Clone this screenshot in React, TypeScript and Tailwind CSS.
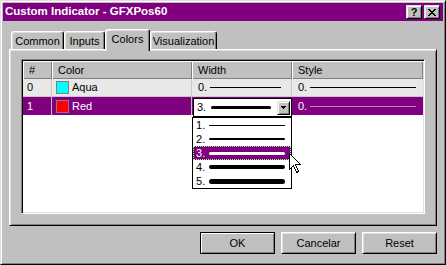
import React from "react";

const F = "font-['Liberation_Sans',Arial,sans-serif]";

function TitleBtn({ children }: { children: React.ReactNode }) {
  return (
    <div className="w-[16px] h-[14px] bg-[#c0c0c0] border border-t-[#dfdfdf] border-l-[#dfdfdf] border-r-black border-b-black shadow-[inset_1px_1px_#fff,inset_-1px_-1px_#808080] flex items-center justify-center">
      {children}
    </div>
  );
}

function Tab({ label, w, selected }: { label: string; w: string; selected?: boolean }) {
  if (selected) {
    return (
      <div
        className={`${w} h-[22px] -mb-[2px] relative z-10 bg-[#c0c0c0] border-t border-l border-white border-r border-r-black rounded-t-[3px] shadow-[inset_-1px_0_#808080,inset_1px_1px_#dfdfdf] flex items-start justify-center pt-[4px]`}
      >
        {label}
      </div>
    );
  }
  return (
    <div
      className={`${w} h-[18px] bg-[#c0c0c0] border-t border-l border-white border-r border-r-black rounded-t-[3px] shadow-[inset_-1px_0_#808080,inset_1px_1px_#dfdfdf] flex items-start justify-center pt-[4px]`}
    >
      {label}
    </div>
  );
}

function Btn({ label, def }: { label: string; def?: boolean }) {
  return (
    <div
      className={
        def
          ? "w-[75px] h-[22px] bg-[#c0c0c0] border border-black shadow-[inset_1px_1px_#fff,inset_-1px_-1px_#808080] flex items-center justify-center"
          : "w-[75px] h-[22px] bg-[#c0c0c0] border border-t-white border-l-white border-r-black border-b-black shadow-[inset_1px_1px_#dfdfdf,inset_-1px_-1px_#808080] flex items-center justify-center"
      }
    >
      {label}
    </div>
  );
}

export default function App() {
  const items = [1, 2, 3, 4, 5];
  return (
    <div
      className={`${F} relative w-[446px] h-[265px] bg-[#c0c0c0] border border-t-[#dfdfdf] border-l-[#dfdfdf] border-r-black border-b-black shadow-[inset_1px_1px_#fff,inset_-1px_-1px_#808080] p-[2px] flex flex-col text-[11px] leading-none text-black select-none`}
    >
      {/* Title bar */}
      <div className="h-[18px] bg-[#800080] flex items-center pl-[2px] pr-[3px]">
        <span className="text-white font-bold text-[11.5px]">Custom Indicator - GFXPos60</span>
        <div className="ml-auto flex gap-[2px]">
          <TitleBtn>
            <span className="font-bold text-[11px] leading-none mt-[1px]">?</span>
          </TitleBtn>
          <TitleBtn>
            <svg width="8" height="7" viewBox="0 0 8 7" shapeRendering="crispEdges">
              <path d="M0 0h2v1h-2zM6 0h2v1h-2zM1 1h2v1h-2zM5 1h2v1h-2zM2 2h4v1h-4zM3 3h2v1h-2zM2 4h4v1h-4zM1 5h2v1h-2zM5 5h2v1h-2zM0 6h2v1h-2zM6 6h2v1h-2z" fill="#000" />
            </svg>
          </TitleBtn>
        </div>
      </div>

      <div className="flex flex-col px-[6px]">
        {/* Tabs */}
        <div className="mt-[8px] h-[20px] flex items-end pl-[2px]">
          <Tab label="Common" w="w-[53px]" />
          <Tab label="Inputs" w="w-[41px]" />
          <Tab label="Colors" w="w-[45px]" selected />
          <Tab label="Visualization" w="w-[67px]" />
        </div>

        {/* Panel */}
        <div className="h-[177px] bg-[#c0c0c0] border border-t-white border-l-white border-r-black border-b-black shadow-[inset_1px_1px_#dfdfdf,inset_-1px_-1px_#808080] pt-[9px] pl-[11px]">
          <div className="w-[404px] h-[155px] bg-white border border-t-[#808080] border-l-[#808080] border-r-white border-b-white shadow-[inset_1px_1px_#000,inset_-1px_-1px_#dfdfdf] p-[1px]">
            {/* Header */}
            <div className="flex h-[18px]">
              {[
                ["#", "w-[29px]"],
                ["Color", "w-[140px]"],
                ["Width", "w-[100px]"],
                ["Style", "w-[131px]"],
              ].map(([t, w]) => (
                <div
                  key={t}
                  className={`${w} h-full bg-[#c0c0c0] shadow-[inset_1px_1px_#fff,inset_-1px_-1px_#808080] flex items-center pl-[6px]`}
                >
                  {t}
                </div>
              ))}
            </div>
            {/* Row 0 */}
            <div className="flex h-[18px] bg-[#e8e8e8] border-b border-[#c8c8c8]">
              <div className="w-[29px] border-r border-[#c8c8c8] flex items-center pl-[4px]">0</div>
              <div className="w-[140px] border-r border-[#c8c8c8] flex items-center pl-[4px]">
                <div className="w-[13px] h-[13px] border border-[#808080] bg-[#00ffff]" />
                <span className="ml-[3px]">Aqua</span>
              </div>
              <div className="w-[100px] border-r border-[#c8c8c8] flex items-center pl-[6px]">
                <span>0.</span>
                <div className="ml-[3px] w-[71px] h-[1px] bg-black" />
              </div>
              <div className="w-[131px] flex items-center pl-[6px]">
                <span>0.</span>
                <div className="ml-[3px] w-[106px] h-[1px] bg-black" />
              </div>
            </div>
            {/* Row 1 */}
            <div className="flex h-[18px] bg-[#800080] text-white">
              <div className="w-[29px] border-r border-[#c0c0c0] flex items-center pl-[4px]">1</div>
              <div className="w-[140px] border-r border-[#c0c0c0] flex items-center pl-[4px]">
                <div className="w-[13px] h-[13px] border border-[#808080] bg-[#ff0000]" />
                <span className="ml-[3px]">Red</span>
              </div>
              <div className="w-[100px] relative">
                {/* Combobox */}
                <div className="absolute left-[1px] top-[1px] w-[99px] h-[19px] z-20 bg-white border border-black p-[1px] flex items-center text-black">
                  <span className="ml-[2px]">3.</span>
                  <div className="ml-[5px] w-[60px] h-[3px] bg-black rounded-full" />
                  <div className="ml-auto w-[13px] h-[14px] bg-[#c0c0c0] border border-t-[#dfdfdf] border-l-[#dfdfdf] border-r-black border-b-black shadow-[inset_1px_1px_#fff,inset_-1px_-1px_#808080] flex items-center justify-center">
                    <svg width="5" height="3" viewBox="0 0 5 3" shapeRendering="crispEdges">
                      <path d="M0 0h5v1h-5zM1 1h3v1h-3zM2 2h1v1h-1z" fill="#000" />
                    </svg>
                  </div>
                </div>
                {/* Dropdown list */}
                <div className="absolute left-0 top-[20px] w-[100px] h-[72px] z-30 bg-white border border-black flex flex-col text-black">
                  {items.map((n) => {
                    const sel = n === 3;
                    const h = ["h-[1px]", "h-[2px]", "h-[3px]", "h-[4px]", "h-[5px]"][n - 1];
                    return (
                      <div
                        key={n}
                        className={
                          sel
                            ? "h-[14px] flex items-center pl-[2px] bg-[#800080] text-white border border-dotted border-[#7fff7f]"
                            : "h-[14px] flex items-center pl-[3px]"
                        }
                      >
                        <span className="w-[10px]">{n}.</span>
                        <div
                          className={`ml-[3px] w-[76px] ${h} ${n > 1 ? "rounded-full" : ""} ${sel ? "bg-white" : "bg-black"}`}
                        />
                      </div>
                    );
                  })}
                </div>
              </div>
              <div className="w-[131px] flex items-center pl-[6px]">
                <span>0.</span>
                <div className="ml-[3px] w-[106px] h-[1px] bg-[#c080c0]" />
              </div>
            </div>
          </div>
        </div>

        {/* Buttons */}
        <div className="mt-[6px] flex justify-end gap-[6px]">
          <Btn label="OK" def />
          <Btn label="Cancelar" />
          <Btn label="Reset" />
        </div>
      </div>

      {/* Mouse cursor */}
      <svg
        className="absolute left-[288px] top-[152px] z-40"
        width="13"
        height="21"
        viewBox="0 0 13 21"
        shapeRendering="crispEdges"
      >
        <path
          d="M0.5 0.5 L0.5 16.5 L4.5 12.5 L7.5 19.5 L9.5 18.5 L6.5 11.5 L11.5 11.5 Z"
          fill="#fff"
          stroke="#000"
          strokeWidth="1"
        />
      </svg>
    </div>
  );
}
